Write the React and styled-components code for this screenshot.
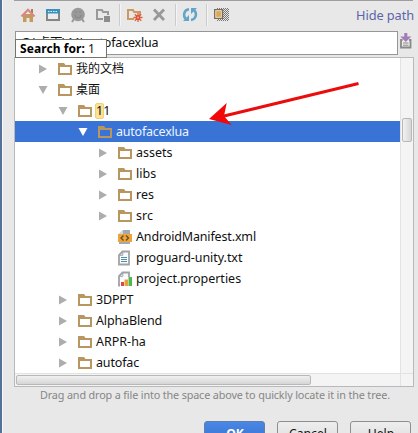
import React from "react";
import styled, { createGlobalStyle } from "styled-components";

const Global = createGlobalStyle`
  * { box-sizing: border-box; }
  body { margin: 0; overflow: hidden; background: #e8e8e8; }
`;
const Dialog = styled.div`
  position: relative;
  width: 418px;
  height: 433px;
  overflow: hidden;
  display: flex;
  flex-direction: column;
  padding: 0 5px 0 12px;
  border-left: 2px solid #54719a;
  box-shadow: inset 1px 0 #f6f8fa;
  background: #e8e8e8;
  font-family: "Noto Sans", "Noto Sans CJK SC", sans-serif;
  font-size: 12px;
  color: #111;
`;
const Toolbar = styled.div`
  height: 31px;
  flex: none;
  border-top: 1px solid #a09c9f;
  display: flex;
  align-items: center;
  padding: 0 0 2px 6px;
`;
const Tool = styled.svg`
  display: block;
  flex: none;
  width: 16px;
  height: 16px;
  margin-right: ${(p) => p.$gap || 0}px;
`;
const Divider = styled.i`
  width: 1px;
  height: 22px;
  background: #cbcbcb;
  box-shadow: 1px 0 #f4f4f4;
  margin-right: ${(p) => p.$gap}px;
`;
const HidePath = styled.span`
  margin-left: auto;
  margin-right: -1px;
  font-size: 12.8px;
  letter-spacing: -0.1px;
  color: #5b66a8;
  white-space: nowrap;
`;
const PathRow = styled.div`
  height: 26px;
  flex: none;
  display: flex;
  align-items: flex-start;
`;
const PathField = styled.div`
  flex: none;
  width: 383px;
  height: 24px;
  margin-left: 1px;
  padding-left: 5px;
  border: 1px solid #969696;
  background: #fff;
  line-height: 22px;
  font-size: 12.5px;
  letter-spacing: -0.18px;
  white-space: nowrap;
`;
const SearchPopup = styled.div`
  position: absolute;
  left: 13px;
  top: 39px;
  width: 92px;
  height: 19px;
  padding-left: 4px;
  border: 1px solid #737568;
  background: #fff;
  line-height: 18px;
  font-size: 12px;
  white-space: nowrap;
  b { letter-spacing: 0.08px; color: #000; }
`;
const TreePane = styled.div`
  width: 400px;
  height: 330px;
  flex: none;
  border: 1px solid #b9b9b9;
  background: #fff;
  display: grid;
  grid-template-columns: 1fr 13px;
  grid-template-rows: 1fr 13px;
`;
const Rows = styled.div`
  overflow: hidden;
`;
const Row = styled.div`
  height: 21px;
  display: flex;
  align-items: center;
  padding-left: ${(p) => 23 + p.$level * 20}px;
  background: ${(p) => (p.$selected ? "#3873d5" : "transparent")};
  color: ${(p) => (p.$selected ? "#eef4ff" : "#111")};
`;
const Arrow = styled.svg`
  width: 10px;
  height: 10px;
  flex: none;
  margin-right: 9px;
  fill: ${(p) => (p.$selected ? "#fff" : "#adadad")};
`;
const FileIcon = styled.svg`
  width: 16px;
  height: 16px;
  flex: none;
  margin-right: 3px;
`;
const Label = styled.span`
  line-height: 20px;
  font-size: ${(p) => p.$size || 12.5}px;
  letter-spacing: ${(p) => p.$track || 0}px;
  white-space: nowrap;
`;
const Match = styled.span`
  display: inline-block;
  height: 16px;
  line-height: 14px;
  margin: 0 -1px;
  border: 1px solid #ecd27c;
  border-radius: 2px;
  background: #fbe291;
`;
const VTrack = styled.div`
  background: #f4f4f4;
  border-left: 1px solid #e2e2e2;
  padding: 60px 1px 0;
`;
const HTrack = styled.div`
  background: #f4f4f4;
  border-top: 1px solid #e2e2e2;
  padding: 1px;
`;
const Corner = styled.div`
  background: #f4f4f4;
  border-top: 1px solid #e2e2e2;
  border-left: 1px solid #e2e2e2;
`;
const VThumb = styled.div`
  height: 24px;
  border: 1px solid #b8b8b8;
  border-radius: 2px;
  background: linear-gradient(90deg, #f2f2f2, #d6d6d6);
`;
const HThumb = styled.div`
  width: 295px;
  height: 10px;
  border: 1px solid #b8b8b8;
  border-radius: 2px;
  background: linear-gradient(#f0f0f0, #d6d6d6);
`;
const Hint = styled.div`
  height: 34px;
  flex: none;
  padding-left: 26px;
  line-height: 15px;
  font-size: 10.8px;
  letter-spacing: -0.14px;
  color: #868686;
  white-space: nowrap;
`;
const Actions = styled.div`
  display: flex;
  gap: 12px;
  padding-left: 190px;
`;
const Button = styled.button`
  width: 61px;
  height: 26px;
  flex: none;
  padding: 0 0 0 1px;
  border: 1px solid ${(p) => (p.$primary ? "#5f7fae" : "#8f8f8f")};
  border-radius: 3px;
  background: ${(p) => (p.$primary ? "linear-gradient(#4a86e4, #3570cf)" : "linear-gradient(#eeeeee, #dadada)")};
  color: ${(p) => (p.$primary ? "#fff" : "#111")};
  font: ${(p) => (p.$primary ? 700 : 400)} 12.2px/22px "Noto Sans", sans-serif;
`;
const Pointer = styled.svg`
  position: absolute;
  left: 202px;
  top: 78px;
  width: 158px;
  height: 50px;
`;

const Home = () => (
  <Tool $gap={9} viewBox="0 0 16 16">
    <path d="M3 7h10v8H9.500v-4h-3v4H3z" fill="#c49a62" />
    <path d="M11 2h2v4h-2z" fill="#a97c55" />
    <path d="M1.500 9.500L8 2.800l6.500 6.700" fill="none" stroke="#dc8583" strokeWidth="2.200" />
  </Tool>
);
const Desktop = () => (
  <Tool $gap={9} viewBox="0 0 16 16">
    <path d="M1 2h14v12H1z" fill="#858585" />
    <path d="M3 6h10v6H3z" fill="#ececec" />
    <path d="M1 2h14v4.500H1z" fill="#3b91bd" />
    <path d="M3 4.500h10" stroke="#d9f2ff" strokeWidth="1" strokeDasharray="1.500 1" />
  </Tool>
);
const Project = () => (
  <Tool $gap={9} viewBox="0 0 16 16">
    <circle cx="8" cy="7.500" r="6.800" fill="#999" />
    <path d="M4 12l-2 3M12 12l2 3" stroke="#999" strokeWidth="2" />
    <path d="M5 8a3 3 0 0 0 6 0M6 4v2M10 4v2" stroke="#858585" fill="none" />
  </Tool>
);
const Module = () => (
  <Tool $gap={8} viewBox="0 0 16 16">
    <path d="M8 12H2V3h5l1 2h5v3" fill="none" stroke="#999" strokeWidth="2" />
    <path d="M9 9h6v6H9z" fill="#8c8c8c" />
  </Tool>
);
const NewFolder = () => (
  <Tool $gap={8} viewBox="0 0 16 16">
    <path d="M7 12H1V3h5l1 2h6v3" fill="none" stroke="#c89b62" strokeWidth="2" />
    <path d="M11 6v9M6.500 10.500h9M7.800 7.300l6.400 6.400M14.200 7.300l-6.400 6.400" stroke="#e05e42" strokeWidth="1.300" />
    <circle cx="11" cy="10.500" r="2.400" fill="#dc5035" />
    <circle cx="11" cy="10.500" r="1" fill="#f7ad96" />
  </Tool>
);
const Delete = () => (
  <Tool $gap={8} viewBox="0 0 16 16">
    <path d="M3 2.500l10 10.500M13 2.500L3 13" stroke="#989898" strokeWidth="2.800" />
  </Tool>
);
const Refresh = () => (
  <Tool $gap={8} viewBox="0 0 16 16">
    <path d="M7 2.300C1.500 3 .8 9.500 4 12M9 13c5.500-.7 6.200-7.200 3-9.700" fill="none" stroke="#62a5c9" strokeWidth="2.500" />
    <path d="M1 14h6V8zM15 1H9v6z" fill="#62a5c9" />
  </Tool>
);
const Hidden = () => (
  <Tool viewBox="0 0 16 16">
    <defs>
      <pattern id="dots" width="2" height="2" patternUnits="userSpaceOnUse">
        <path d="M0 0h1v1H0zM1 1h1v1H1z" fill="#777" />
      </pattern>
    </defs>
    <path d="M3 1h12v13H3z" fill="url(#dots)" />
    <path d="M.6 2.500h8v9h-8z" fill="#d9a85f" stroke="#766e64" strokeWidth="1.200" />
    <path d="M1.800 3.700h5.600v6.600H1.800z" fill="none" stroke="#efddc1" strokeWidth=".8" />
  </Tool>
);
const DropTarget = styled(Tool)`
  margin-top: 2px;
`;

const icons = {
  folder: (
    <path fillRule="evenodd" d="M1 2h6l1.500 2H15v10H1zM3 6v6h10V6z" fill="#b99560" />
  ),
  xml: (
    <>
      <path d="M2 5l4-4h7v4M2 13v2h11v-2" fill="#a5a9ac" />
      <path d="M6 1v4H2z" fill="#d5d8da" />
      <path d="M1 5h14v8H1z" fill="#eca53d" />
      <path d="M6.500 6.500L4 9l2.500 2.500M9 6.500L11.500 9 9 11.500" fill="none" stroke="#684b25" strokeWidth="1.300" />
    </>
  ),
  text: (
    <>
      <path d="M5.500 1.500H12v13H2V5z" fill="#f8fafb" stroke="#a0a3a5" strokeWidth="1.800" />
      <path d="M2 5.300h3.800V1.500" fill="none" stroke="#a0a3a5" />
      <path d="M4 7.500h6M4 9.500h6M4 11.500h6" stroke="#528ca5" />
    </>
  ),
  props: (
    <>
      <path d="M5.500 1.500H12v13H2V5z" fill="#f8fafb" stroke="#a0a3a5" strokeWidth="1.800" />
      <path d="M2 5.300h3.800V1.500" fill="none" stroke="#a0a3a5" />
      <path d="M3 9h4V6h9v10H3z" fill="#fff" />
      <path d="M4 11h3v4H4z" fill="#dc4650" />
      <path d="M7.500 8.500h3.500V15H7.500z" fill="#e7a13b" />
      <path d="M11.500 6H15v9h-3.500z" fill="#4fb94c" />
    </>
  ),
};

const nodes = [
  { label: "我的文档", level: 0, size: 12 },
  { label: "桌面", level: 0, open: true, size: 12 },
  { label: "1", match: "1", level: 1, open: true },
  { label: "autofacexlua", level: 2, open: true, selected: true, track: -0.22 },
  { label: "assets", level: 3 },
  { label: "libs", level: 3 },
  { label: "res", level: 3 },
  { label: "src", level: 3 },
  { label: "AndroidManifest.xml", level: 3, icon: "xml", track: -0.15 },
  { label: "proguard-unity.txt", level: 3, icon: "text", track: -0.05 },
  { label: "project.properties", level: 3, icon: "props" },
  { label: "3DPPT", level: 1, track: -0.2 },
  { label: "AlphaBlend", level: 1, track: -0.13 },
  { label: "ARPR-ha", level: 1 },
  { label: "autofac", level: 1, track: -0.15 },
];

function TreeNode({ label, level, icon = "folder", open, selected, match, size, track }) {
  return (
    <Row $level={level} $selected={selected}>
      <Arrow viewBox="0 0 10 10" $selected={selected}>
        {icon === "folder" && <path d={open ? "M.5 1h9L5 9z" : "M1 .5v9L9 5z"} />}
      </Arrow>
      <FileIcon viewBox="0 0 16 16">{icons[icon]}</FileIcon>
      <Label $size={size} $track={track}>
        {match && <Match>{match}</Match>}
        {label}
      </Label>
    </Row>
  );
}

export default function App() {
  return (
    <>
      <Global />
      <Dialog>
        <Toolbar>
          <Home />
          <Desktop />
          <Project />
          <Module />
          <Divider $gap={7} />
          <NewFolder />
          <Delete />
          <Divider $gap={6} />
          <Refresh />
          <Divider $gap={7} />
          <Hidden />
          <HidePath>Hide path</HidePath>
        </Toolbar>
        <PathRow>
          <PathField>G:\桌面\11\autofacexlua</PathField>
          <DropTarget viewBox="0 0 16 16">
            <path d="M4.500 7H3v7.500h9.500V7H11" fill="#eee" stroke="#888" strokeWidth="1.800" />
            <path d="M5 10h5.500M5 12.200h5.500" stroke="#888" />
            <path d="M6.300 0h3v3.500h4L7.800 9 2.300 3.500h4z" fill="#a47bb6" />
          </DropTarget>
        </PathRow>
        <TreePane>
          <Rows>
            {nodes.map((node) => (
              <TreeNode key={node.label} {...node} />
            ))}
          </Rows>
          <VTrack><VThumb /></VTrack>
          <HTrack><HThumb /></HTrack>
          <Corner />
        </TreePane>
        <Hint>Drag and drop a file into the space above to quickly locate it in the tree.</Hint>
        <Actions>
          <Button $primary>OK</Button>
          <Button>Cancel</Button>
          <Button>Help</Button>
        </Actions>
        <SearchPopup><b>Search for:</b> 1</SearchPopup>
        <Pointer viewBox="0 0 158 50">
          <path d="M19 38.200L154.500 5.500" stroke="#eb0c0c" strokeWidth="3" />
          <path d="M5 41L22.700 25l-2.700 13 7.700 9z" fill="#f20808" />
        </Pointer>
      </Dialog>
    </>
  );
}
